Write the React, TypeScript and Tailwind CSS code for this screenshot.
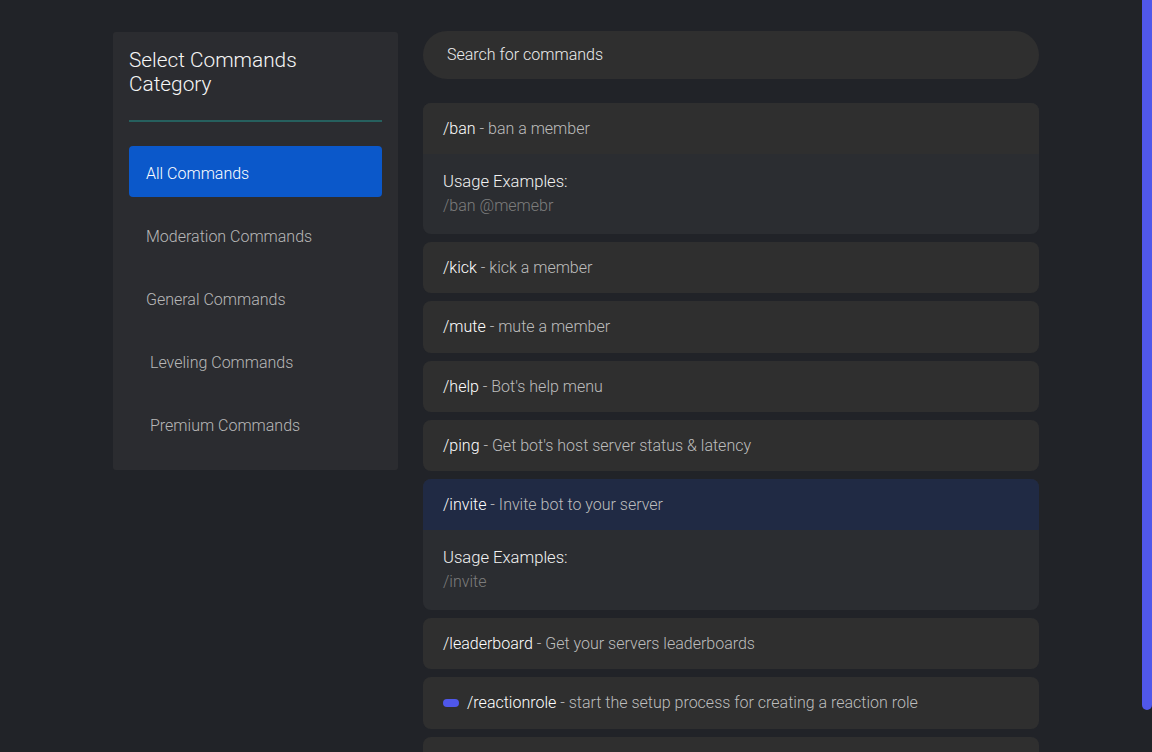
import React from "react";

type Cmd = { name: string; desc: string; usage?: string; active?: boolean; pill?: boolean };

const cmds: Cmd[] = [
  { name: "/ban", desc: "ban a member", usage: "/ban @memebr" },
  { name: "/kick", desc: "kick a member" },
  { name: "/mute", desc: "mute a member" },
  { name: "/help", desc: "Bot's help menu" },
  { name: "/ping", desc: "Get bot's host server status & latency" },
  { name: "/invite", desc: "Invite bot to your server", usage: "/invite", active: true },
  { name: "/leaderboard", desc: "Get your servers leaderboards" },
  { name: "/reactionrole", desc: "start the setup process for creating a reaction role", pill: true },
];

const categories = [
  { label: "All Commands", active: true, pad: "pl-[17px]" },
  { label: "Moderation Commands", pad: "pl-[17px]" },
  { label: "General Commands", pad: "pl-[17px]" },
  { label: "Leveling Commands", pad: "pl-[21px]" },
  { label: "Premium Commands", pad: "pl-[21px]" },
];

export default function App() {
  return (
    <div
      className="relative h-[752px] w-full overflow-hidden bg-[#212328] font-light"
      style={{ fontFamily: "Roboto, 'Noto Sans', sans-serif" }}
    >
      <div className="mx-auto flex w-[926px] items-start gap-[25px] pt-[31px]">
        <aside className="mt-[1px] w-[285px] shrink-0 rounded-[3px] bg-[#2b2c30] px-4 pt-4 pb-[21px]">
          <h2 className="max-w-[200px] text-[20.8px] leading-[24px] text-[#f6f6f6]">
            Select Commands Category
          </h2>
          <div className="mt-6 h-[2px] w-full bg-[#26605e]" />
          <div className="mt-6 flex flex-col gap-3">
            {categories.map((c) => (
              <div
                key={c.label}
                className={`flex h-[51px] items-center rounded-[4px] pt-[4px] ${c.pad} text-[16px] ${
                  c.active ? "bg-[#0b58ca] text-white" : "text-[#b8b8b8]"
                }`}
              >
                {c.label}
              </div>
            ))}
          </div>
        </aside>
        <main className="w-[616px] shrink-0">
          <div className="flex h-[48px] items-center rounded-[24px] bg-[#2f2f2f] px-6 text-[16px] text-[#ececec]">
            Search for commands
          </div>
          <div className="mt-6 flex flex-col gap-[8px]">
            {cmds.map((c) => (
              <div key={c.name} className="overflow-hidden rounded-[8px] bg-[#2b2d31]">
                <div
                  className={`flex items-center gap-2 px-5 py-4 text-[16px] leading-[19.2px] ${
                    c.active ? "bg-[#202a44]" : "bg-[#2f2f2f]"
                  }`}
                >
                  {c.pill && <span className="inline-block h-[8px] w-[16px] rounded-full bg-[#4f57ea]" />}
                  <span>
                    <span className="text-white">{c.name}</span>
                    <span className="text-[#bdbdbd]"> - {c.desc}</span>
                  </span>
                </div>
                {c.usage && (
                  <div className="px-5 pt-4 pb-4 text-[16px] leading-[24px]">
                    <div className="text-[16.6px] text-[#f2f2f2]">Usage Examples:</div>
                    <div className="text-[#7d7d7d]">{c.usage}</div>
                  </div>
                )}
              </div>
            ))}
            <div className="h-[51px] rounded-[8px] bg-[#2f2f2f]" />
          </div>
        </main>
      </div>
      <div className="absolute right-0 top-0 h-[710px] w-[10px] rounded-b-[6px] bg-[#5057ea]" />
    </div>
  );
}
